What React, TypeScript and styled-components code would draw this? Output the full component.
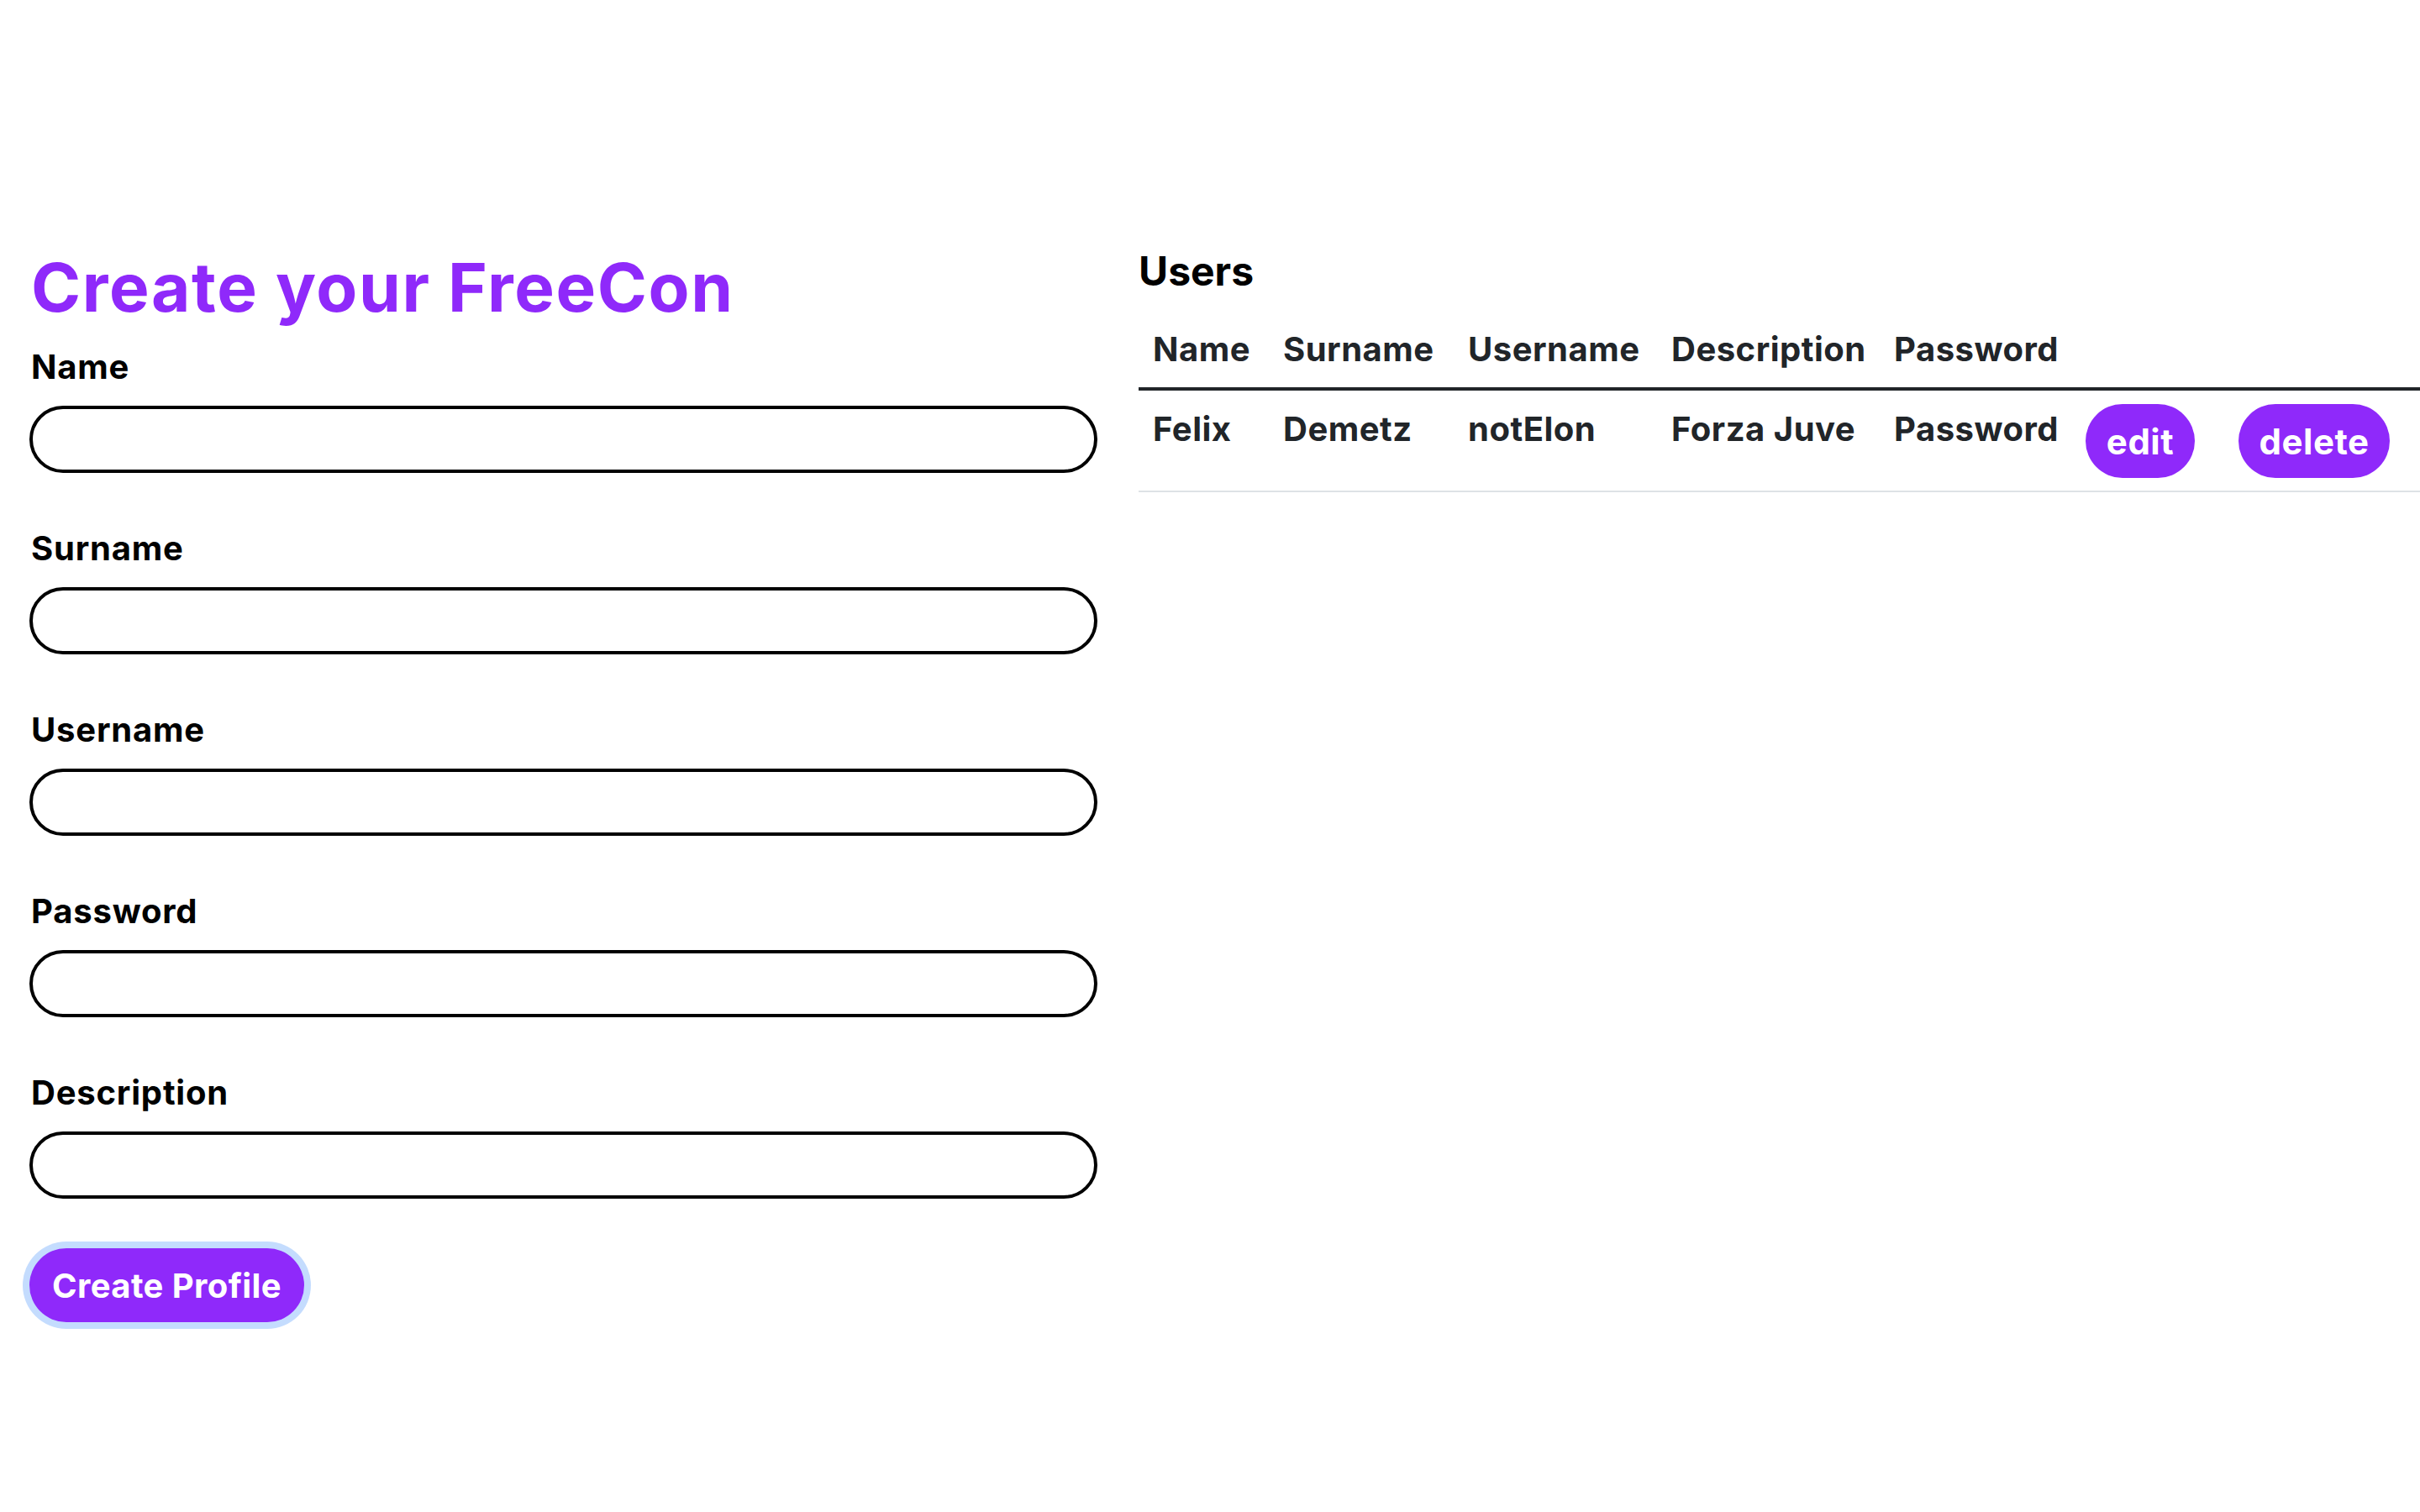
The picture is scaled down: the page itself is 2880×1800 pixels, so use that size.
import { FunctionComponent } from "react";
import styled, { createGlobalStyle } from "styled-components";

const purple = "#8f29fa";
const ink = "#212529";

const GlobalStyle = createGlobalStyle`
  html, body {
    margin: 0;
    padding: 0;
    background: #ffffff;
    overflow: hidden;
  }
  body {
    font-family: Inter, "Open Sans", sans-serif;
    color: #000000;
  }
  * {
    box-sizing: border-box;
  }
`;

const fields = ["Name", "Surname", "Username", "Password", "Description"];

const columns = [
  { label: "Name", width: 155 },
  { label: "Surname", width: 220 },
  { label: "Username", width: 242 },
  { label: "Description", width: 265 },
  { label: "Password", width: 228 },
];

const users = [
  {
    name: "Felix",
    surname: "Demetz",
    username: "notElon",
    description: "Forza Juve",
    password: "Password",
  },
];

const ProfileForm: FunctionComponent = () => {
  return (
    <FormColumn>
      <Title>Create your FreeCon</Title>
      {fields.map((field) => {
        return (
          <Field key={field}>
            <Label htmlFor={field}>{field}</Label>
            <Input id={field} type="text" />
          </Field>
        );
      })}
      <SubmitButton type="button">Create Profile</SubmitButton>
    </FormColumn>
  );
};

const UsersTable: FunctionComponent = () => {
  return (
    <TableColumn>
      <Heading>Users</Heading>
      <StyledTable>
        <colgroup>
          {columns.map((column) => (
            <col key={column.label} style={{ width: column.width }} />
          ))}
          <col style={{ width: 164 }} />
          <col />
        </colgroup>
        <thead>
          <tr>
            {columns.map((column) => (
              <TableHead key={column.label}>{column.label}</TableHead>
            ))}
            <TableHead />
            <TableHead />
          </tr>
        </thead>
        <tbody>
          {users.map((user) => (
            <tr key={user.username}>
              <TableData>{user.name}</TableData>
              <TableData>{user.surname}</TableData>
              <TableData>{user.username}</TableData>
              <TableData>{user.description}</TableData>
              <TableData>{user.password}</TableData>
              <ActionData inset={17}>
                <PillButton type="button" width={130}>
                  edit
                </PillButton>
              </ActionData>
              <ActionData inset={35}>
                <PillButton type="button" width={180}>
                  delete
                </PillButton>
              </ActionData>
            </tr>
          ))}
        </tbody>
      </StyledTable>
    </TableColumn>
  );
};

export default function App() {
  return (
    <>
      <GlobalStyle />
      <Page>
        <ProfileForm />
        <UsersTable />
      </Page>
    </>
  );
}

const Page = styled.div`
  display: flex;
  gap: 49px;
  width: 2880px;
  height: 1800px;
  padding: 294px 0 0 35px;
`;

const FormColumn = styled.form`
  display: flex;
  flex-direction: column;
  align-items: flex-start;
  width: 1271px;
  flex-shrink: 0;
`;

const Title = styled.h1`
  margin: 0 0 17px 2px;
  font-size: 80px;
  line-height: 96px;
  font-weight: 700;
  letter-spacing: 1.6px;
  color: ${purple};
`;

const Field = styled.div`
  display: flex;
  flex-direction: column;
  width: 100%;
  margin-bottom: 60px;
`;

const Label = styled.label`
  margin: 0 0 16px 2px;
  font-size: 40px;
  line-height: 60px;
  font-weight: 700;
  letter-spacing: 0.8px;
  color: #000000;
`;

const Input = styled.input`
  width: 100%;
  height: 80px;
  border: 4px solid #000000;
  border-radius: 40px;
  padding: 0 30px;
  font-family: inherit;
  font-size: 36px;
  background: #ffffff;
  outline: none;
`;

const SubmitButton = styled.button`
  height: 88px;
  width: 327px;
  margin-top: -1px;
  border: none;
  border-radius: 44px;
  background: ${purple};
  color: #ffffff;
  font-family: inherit;
  font-size: 40px;
  font-weight: 700;
  letter-spacing: 0.4px;
  padding: 0;
  box-shadow: 0 0 0 8px #c4dcfe;
  cursor: pointer;
`;

const TableColumn = styled.div`
  flex: 1;
  display: flex;
  flex-direction: column;
  min-width: 0;
`;

const Heading = styled.h2`
  margin: 0 0 17px 0;
  font-size: 48px;
  line-height: 58px;
  font-weight: 700;
  color: #000000;
`;

const StyledTable = styled.table`
  width: 100%;
  table-layout: fixed;
  border-collapse: collapse;
  color: ${ink};
`;

const TableHead = styled.th`
  text-align: left;
  vertical-align: top;
  padding: 17px 17px 15px 17px;
  font-size: 40px;
  line-height: 60px;
  font-weight: 700;
  letter-spacing: 0.5px;
  white-space: nowrap;
  border-bottom: 4px solid ${ink};
`;

const TableData = styled.td`
  text-align: left;
  vertical-align: top;
  padding: 16px 17px 15px 17px;
  font-size: 40px;
  line-height: 60px;
  font-weight: 700;
  letter-spacing: 0.5px;
  white-space: nowrap;
  border-bottom: 2px solid #dee2e6;
`;

const ActionData = styled(TableData)<{ inset: number }>`
  padding-left: ${({ inset }) => inset}px;
`;

const PillButton = styled.button<{ width: number }>`
  display: block;
  width: ${({ width }) => width}px;
  height: 88px;
  border: none;
  border-radius: 44px;
  background: ${purple};
  color: #ffffff;
  font-family: inherit;
  font-size: 42px;
  font-weight: 700;
  letter-spacing: 0.5px;
  padding: 0;
  cursor: pointer;
`;
